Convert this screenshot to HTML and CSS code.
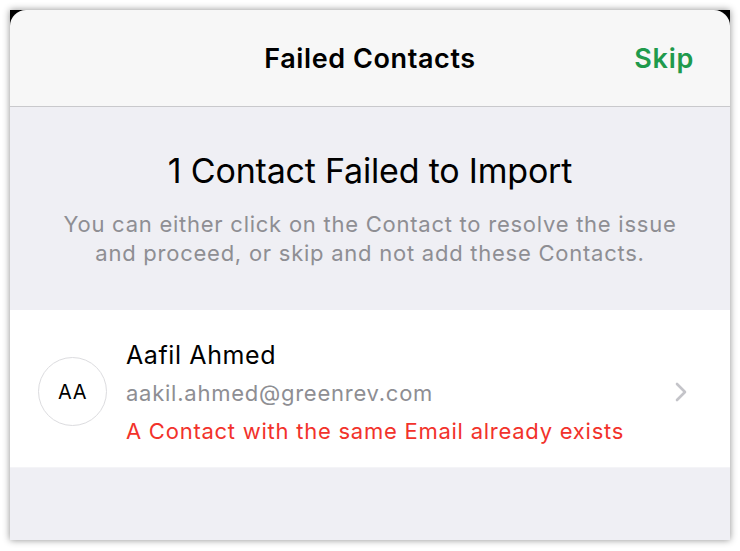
FILE: index.html
```html
<!DOCTYPE html>
<html lang="en">
<head>
    <meta charset="UTF-8">
    <meta name="viewport" content="width=device-width, initial-scale=1.0">
    <title>Failed Contacts</title>
    <link rel="stylesheet" href="styles.css">
</head>
<body>
    <div class="sheet">
        <div class="nav-bar">
            <div class="nav-title">Failed Contacts</div>
            <div class="nav-action">Skip</div>
        </div>

        <div class="intro">
            <h1 class="intro-title">1 Contact Failed to Import</h1>
            <p class="intro-text">You can either click on the Contact to resolve the issue<br>and proceed, or skip and not add these Contacts.</p>
        </div>

        <div class="contact-row">
            <div class="avatar">AA</div>
            <div class="contact-info">
                <div class="contact-name">Aafil Ahmed</div>
                <div class="contact-email">aakil.ahmed@greenrev.com</div>
                <div class="contact-error">A Contact with the same Email already exists</div>
            </div>
            <svg class="chevron" width="14" height="22" viewBox="0 0 14 22">
                <path d="M3 3 L11 11 L3 19" fill="none" stroke="#c4c4c9" stroke-width="2.6" stroke-linecap="round" stroke-linejoin="round"/>
            </svg>
        </div>

        <div class="filler"></div>
    </div>
</body>
</html>
```

FILE: styles.css
```css
body {
    margin: 0;
    background-color: #ffffff;
    font-family: Inter, "Noto Sans", sans-serif;
}
.sheet {
    margin: 10px;
    width: 720px;
    height: 530px;
    background-color: #000;
    box-shadow: 0 0 7px rgba(0, 0, 0, 0.45);
    display: flex;
    flex-direction: column;
}
.nav-bar {
    height: 96px;
    background-color: #f7f7f7;
    border-bottom: 1px solid #c9c9cc;
    border-radius: 16px 16px 0 0;
    position: relative;
    display: flex;
    align-items: center;
    justify-content: center;
}
.nav-title {
    font-size: 27px;
    font-weight: 600;
    color: #000;
    letter-spacing: 0.6px;
}
.nav-action {
    position: absolute;
    right: 36px;
    top: 0;
    bottom: 0;
    display: flex;
    align-items: center;
    font-size: 27px;
    font-weight: 600;
    color: #1f9a4c;
    letter-spacing: 0.7px;
}
.intro {
    height: 203px;
    background-color: #efeff4;
    text-align: center;
    padding-top: 44px;
    box-sizing: border-box;
}
.intro-title {
    margin: 0;
    font-size: 34px;
    font-weight: 400;
    color: #000;
    line-height: 40px;
    letter-spacing: -0.2px;
}
.intro-text {
    margin: 19px 0 0;
    font-size: 22px;
    line-height: 29px;
    color: #8e8e93;
    letter-spacing: 0.75px;
}
.contact-row {
    height: 157px;
    background-color: #fff;
    display: flex;
    align-items: center;
    padding: 0 42px 0 28px;
}
.avatar {
    width: 67px;
    height: 67px;
    margin-top: 6px;
    border: 1px solid #dcdcdf;
    border-radius: 50%;
    display: flex;
    align-items: center;
    justify-content: center;
    font-size: 20px;
    color: #000;
    letter-spacing: 0.6px;
    flex-shrink: 0;
}
.contact-info {
    flex: 1;
    margin-left: 19px;
    display: flex;
    flex-direction: column;
    padding-top: 9px;
}
.contact-name {
    font-size: 25px;
    line-height: 38px;
    color: #000;
    letter-spacing: 0.6px;
}
.contact-email {
    font-size: 22px;
    line-height: 38px;
    color: #8e8e93;
    letter-spacing: 0.75px;
}
.contact-error {
    font-size: 22px;
    line-height: 38px;
    color: #f2322b;
    letter-spacing: 0.75px;
}
.chevron {
    flex-shrink: 0;
    margin-top: 7px;
}
.filler {
    flex: 1;
    background-color: #efeff4;
    border-top: 1px solid #f4f4f7;
}
```
